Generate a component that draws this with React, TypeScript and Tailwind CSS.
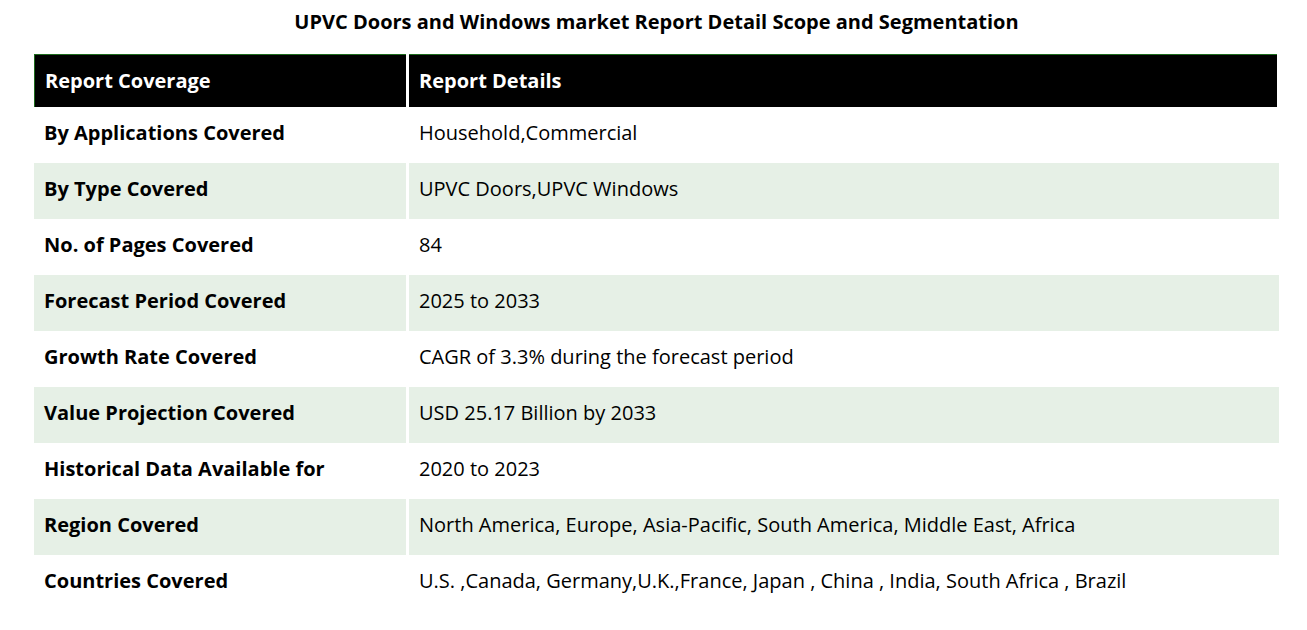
const rows: [string, string][] = [
  ["By Applications Covered", "Household,Commercial"],
  ["By Type Covered", "UPVC Doors,UPVC Windows"],
  ["No. of Pages Covered", "84"],
  ["Forecast Period Covered", "2025 to 2033"],
  ["Growth Rate Covered", "CAGR of 3.3% during the forecast period"],
  ["Value Projection Covered", "USD 25.17 Billion by 2033"],
  ["Historical Data Available for", "2020 to 2023"],
  ["Region Covered", "North America, Europe, Asia-Pacific, South America, Middle East, Africa"],
  [
    "Countries Covered",
    "U.S. ,Canada, Germany,U.K.,France, Japan , China , India, South Africa , Brazil",
  ],
];

export default function App() {
  return (
    <div
      className="min-h-[630px] bg-white pl-[34px] pr-[28px] text-black"
      style={{ fontFamily: '"Open Sans", "Liberation Sans", sans-serif' }}
    >
      <h2 className="pt-[7px] text-center text-[20px] font-bold leading-[30px]">
        UPVC Doors and Windows market Report Detail Scope and Segmentation
      </h2>

      <div className="mt-[17px] grid grid-cols-[372px_1fr] gap-x-[3px]">
        <div className="flex h-[53px] items-center border-t border-l border-[#1d6b1d] bg-black pl-[10px] text-[20px] font-bold text-white">
          Report Coverage
        </div>
        <div className="mr-[2px] flex h-[53px] items-center border-t border-[#1d6b1d] bg-black pl-[10px] text-[20px] font-bold text-white">
          Report Details
        </div>

        {rows.map(([label, value], i) => {
          const shaded = i % 2 === 1;
          return (
            <div key={label} className="contents">
              <div
                className={`flex h-[56px] items-center pb-[4px] pl-[10px] text-[20px] font-bold ${
                  shaded ? "bg-[#e6f0e6]" : "bg-white"
                }`}
              >
                {label}
              </div>
              <div
                className={`flex h-[56px] items-center pb-[4px] pl-[10px] text-[20px] ${
                  shaded ? "bg-[#e6f0e6]" : "bg-white"
                }`}
              >
                {value}
              </div>
            </div>
          );
        })}
      </div>
    </div>
  );
}
